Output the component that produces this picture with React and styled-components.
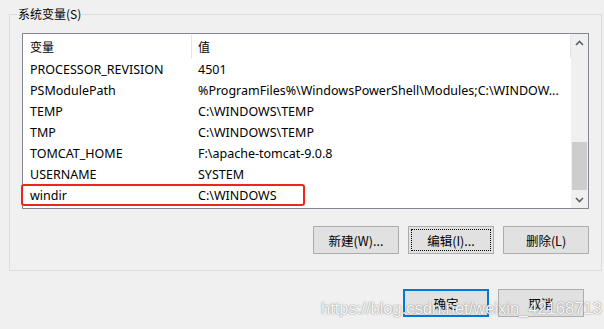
import React from "react";
import styled, { createGlobalStyle } from "styled-components";

const Global = createGlobalStyle`
  html, body { margin: 0; padding: 0; background: #f0f0f0; }
  body { font-family: "Noto Sans", "Noto Sans CJK SC", sans-serif; }
`;

const Page = styled.div`
  position: relative;
  width: 604px;
  height: 329px;
  overflow: hidden;
  background: #f0f0f0;
  display: flex;
  flex-direction: column;
  box-sizing: border-box;
  padding-top: 14px;
`;

const Group = styled.div`
  position: relative;
  margin: 0 2px 0 9px;
  height: 257px;
  box-sizing: border-box;
  border: 1px solid #dcdcdc;
  padding: 18px 12px 0 12px;
  display: flex;
  flex-direction: column;
`;

const Legend = styled.span`
  position: absolute;
  left: 7px;
  top: -9px;
  padding: 0 1px;
  background: #f0f0f0;
  font-family: "Noto Sans CJK SC", sans-serif;
  font-size: 12px;
  line-height: 16px;
  color: #000;
`;

const ListBox = styled.div`
  width: 567px;
  height: 176px;
  box-sizing: border-box;
  border: 1px solid #828790;
  background: #fff;
  display: flex;
`;

const Table = styled.div`
  flex: 1;
  display: flex;
  flex-direction: column;
  min-width: 0;
`;

const HeaderRow = styled.div`
  display: flex;
  height: 25px;
  align-items: stretch;
`;

const HeaderCell = styled.div`
  width: ${(p) => p.$w}px;
  flex: ${(p) => (p.$grow ? 1 : "none")};
  box-sizing: border-box;
  padding-left: ${(p) => p.$pad}px;
  display: flex;
  align-items: center;
  font-family: "Noto Sans CJK SC", sans-serif;
  font-size: 12px;
  color: #000;
  border-right: 1px solid #e5e5e5;
  margin: 1px 0 1px;
`;

const Row = styled.div`
  position: relative;
  display: flex;
  height: 21px;
  align-items: center;
`;

const Cell = styled.div`
  width: ${(p) => p.$w}px;
  flex: ${(p) => (p.$grow ? 1 : "none")};
  min-width: 0;
  box-sizing: border-box;
  padding-left: ${(p) => p.$pad}px;
  font-family: "Noto Sans", "Noto Sans CJK SC", sans-serif;
  font-size: 12.5px;
  line-height: 17px;
  color: #000;
  white-space: nowrap;
  overflow: hidden;
`;

const Highlight = styled.div`
  position: absolute;
  left: -2px;
  top: -1px;
  width: 284px;
  height: 22px;
  box-sizing: border-box;
  border: 2px solid #f2231b;
  border-radius: 3px;
  pointer-events: none;
`;

const ScrollBar = styled.div`
  width: 17px;
  background: #f0f0f0;
  display: flex;
  flex-direction: column;
`;

const Arrow = styled.div`
  height: 17px;
  display: flex;
  align-items: center;
  justify-content: center;
`;

const Track = styled.div`
  flex: 1;
  display: flex;
  flex-direction: column;
  padding: 0 1px;
`;

const Thumb = styled.div`
  margin-top: ${(p) => p.$top}px;
  height: ${(p) => p.$h}px;
  background: #cdcdcd;
`;

const ButtonRow = styled.div`
  display: flex;
  justify-content: flex-end;
  gap: 9px;
  padding-right: ${(p) => p.$pr || 0}px;
  margin-top: ${(p) => p.$mt}px;
`;

const Button = styled.button`
  width: 86px;
  height: 28px;
  box-sizing: border-box;
  margin: 0;
  padding: 0;
  background: #e1e1e1;
  border: ${(p) => (p.$default ? "2px solid #0078d7" : "1px solid #adadad")};
  font-family: "Noto Sans CJK SC", sans-serif;
  font-size: 12.5px;
  color: #000;
  outline: ${(p) => (p.$focus ? "1px dotted #000" : "none")};
  outline-offset: -4px;
`;

const Watermark = styled.div`
  position: absolute;
  left: 321px;
  top: 299px;
  font-family: "Liberation Sans", sans-serif;
  font-size: 16.5px;
  color: rgba(255, 255, 255, 0.95);
  text-shadow: 0 0 1px rgba(90, 90, 90, 0.7), 0 0 2px rgba(140, 140, 140, 0.5);
  white-space: nowrap;
  pointer-events: none;
`;

const Chevron = ({ up }) => (
  <svg width="9" height="6" viewBox="0 0 9 6">
    <path
      d={up ? "M1 5 L4.5 1.5 L8 5" : "M1 1 L4.5 4.5 L8 1"}
      fill="none"
      stroke="#606060"
      strokeWidth="1.6"
    />
  </svg>
);

const rows = [
  ["PROCESSOR_REVISION", "4501"],
  ["PSModulePath", "%ProgramFiles%\\WindowsPowerShell\\Modules;C:\\WINDOW..."],
  ["TEMP", "C:\\WINDOWS\\TEMP"],
  ["TMP", "C:\\WINDOWS\\TEMP"],
  ["TOMCAT_HOME", "F:\\apache-tomcat-9.0.8"],
  ["USERNAME", "SYSTEM"],
  ["windir", "C:\\WINDOWS"],
];

export default function App() {
  return (
    <Page>
      <Global />
      <Group>
        <Legend>系统变量(S)</Legend>
        <ListBox>
          <Table>
            <HeaderRow>
              <HeaderCell $w={169} $pad={7}>变量</HeaderCell>
              <HeaderCell $grow $pad={6}>值</HeaderCell>
            </HeaderRow>
            {rows.map(([k, v], i) => (
              <Row key={k}>
                <Cell $w={169} $pad={7}>{k}</Cell>
                <Cell $grow $pad={6}>{v}</Cell>
                {i === rows.length - 1 && <Highlight />}
              </Row>
            ))}
          </Table>
          <ScrollBar>
            <Arrow>
              <Chevron up />
            </Arrow>
            <Track>
              <Thumb $top={91} $h={48} />
            </Track>
            <Arrow>
              <Chevron />
            </Arrow>
          </ScrollBar>
        </ListBox>
        <ButtonRow $mt={17}>
          <Button>新建(W)...</Button>
          <Button $focus>编辑(I)...</Button>
          <Button>删除(L)</Button>
        </ButtonRow>
      </Group>
      <ButtonRow $mt={18} $pr={20}>
        <Button $default>确定</Button>
        <Button>取消</Button>
      </ButtonRow>
      <Watermark>https://blog.csdn.net/weixin_42168713</Watermark>
    </Page>
  );
}
